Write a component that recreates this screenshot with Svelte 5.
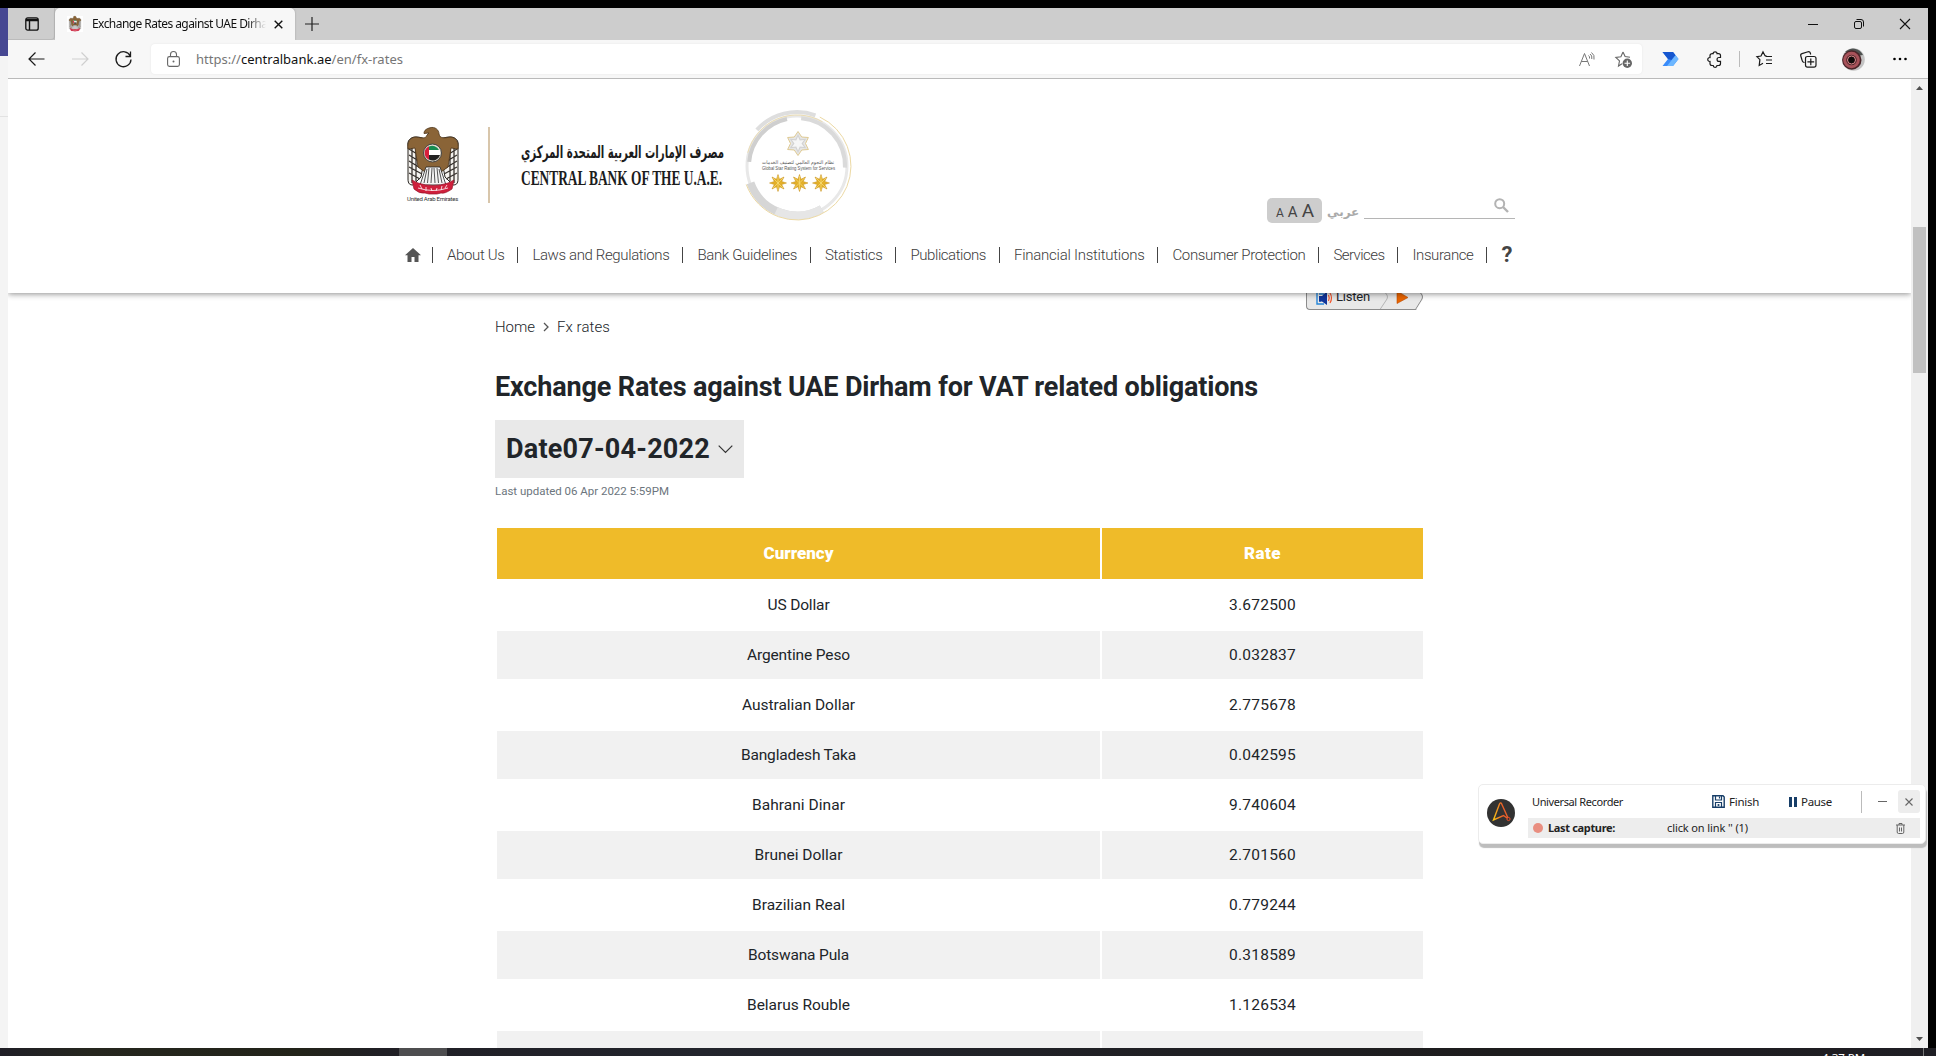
<script>
  const menu = [
    ['About Us', 57.4], ['Laws and Regulations', 137], ['Bank Guidelines', 99.6],
    ['Statistics', 57.5], ['Publications', 75.5], ['Financial Institutions', 130.5],
    ['Consumer Protection', 133], ['Services', 51], ['Insurance', 61]
  ];
  const rates = [
    ['US Dollar', 62, '3.672500'], ['Argentine Peso', 103, '0.032837'],
    ['Australian Dollar', 113, '2.775678'], ['Bangladesh Taka', 115, '0.042595'],
    ['Bahrani Dinar', 93, '9.740604'], ['Brunei Dollar', 88, '2.701560'],
    ['Brazilian Real', 93, '0.779244'], ['Botswana Pula', 101, '0.318589'],
    ['Belarus Rouble', 103, '1.126534']
  ];
  const starPoints = (cx, cy, R, r, n = 8) =>
    Array.from({ length: n * 2 }, (_, i) => {
      const a = (Math.PI * i) / n - Math.PI / 2;
      const q = i % 2 ? r : R;
      return `${(cx + q * Math.cos(a)).toFixed(2)},${(cy + q * Math.sin(a)).toFixed(2)}`;
    }).join(' ');
  const arc = (r, a, b) => {
    const p = (d) => `${(55 + r * Math.cos((d * Math.PI) / 180)).toFixed(2)} ${(56 + r * Math.sin((d * Math.PI) / 180)).toFixed(2)}`;
    return `M${p(a)}A${r} ${r} 0 ${b - a > 180 ? 1 : 0} 1 ${p(b)}`;
  };

  // Tracks a label in or out so that it occupies exactly `width` pixels.
  function fit(node, width) {
    node.style.display = 'inline-block';
    node.style.whiteSpace = 'nowrap';
    const natural = node.getBoundingClientRect().width;
    const count = [...node.textContent].length;
    node.style.letterSpacing = `${(width - natural) / count}px`;
    node.style.width = `${width}px`;
  }
</script>

{#snippet emblem()}
  <path d="M26 12C18 14 17 10 9 10C3 10 0 14 1 19V52C1 57 3 58 6 58L14 50L18 28ZM26 12C34 14 35 10 43 10C49 10 52 14 51 19V52C51 57 49 58 46 58L38 50L34 28Z" fill="#f5f3ef" stroke="#26231f" stroke-width="1" />
  <path d="M2 22L15 30M2 28L15 36M2 34L15 42M2 40L15 47M2 46L13 52M50 22L37 30M50 28L37 36M50 34L37 42M50 40L37 47M50 46L39 52M5 20V56M9 22V54M47 20V56M43 22V54" stroke="#38332f" stroke-width="1.300" fill="none" />
  <path d="M23 .8C28-.8 32 3 32 7C33 12 38 11 43 10C49 10 52 15 51 22L44 21L41 40L34 45H18L11 40L8 21L1 22C0 15 3 10 9 10C15 11 19 12 20 8L22 6L17 6.500C17 3 20 1.500 23 .8Z" fill="#8a6437" stroke="#4a3218" stroke-width="0.8" />
  <path d="M19 40H33L39 58H13Z" fill="#f4f4f4" stroke="#222" stroke-width="0.8" />
  <path d="M17 56L20 42M20.500 56L22 41M24 56L25 41M28 56L27 41M31.500 56L30 41M35 56L32 42" stroke="#555" stroke-width="1" />
  <circle cx="25.500" cy="26" r="9" fill="#e3ddcf" stroke="#444" stroke-width="1" />
  <path d="M22 19.500A7.500 7.500 0 0 1 32 23H22Z" fill="#168c50" />
  <path d="M22 23H33V28H22Z" fill="#fff" />
  <path d="M22 28H33A7.500 7.500 0 0 1 22 32.500Z" fill="#222" />
  <path d="M22 19.200A7.500 7.500 0 0 0 22 32.800Z" fill="#d71f3c" />
  <path d="M5 53L11 56Q26 61 41 56L47 53L45 62Q38 67 34 66L30 67H22L18 66Q12 67 7 62Z" fill="#cf203c" stroke="#97142a" stroke-width="0.7" />
  <path d="M11 61Q26 66 41 61M13 58L15 62M19 60V64M24 61L25 64M30 61L29 64M35 59L34 63M40 58L38 61" stroke="#fff" stroke-width="0.8" fill="none" />
{/snippet}

<div class="desktop">
  <div class="behind"><div class="behind-top"></div><div class="behind-bar"></div></div>

  <div class="window">
    <div class="tabs">
      <div class="tab-menu">
        <svg width="14" height="14" viewBox="0 0 14 14"><rect x=".8" y=".8" width="12.400" height="12.400" rx="2" fill="none" stroke="#111" stroke-width="1.300" /><path d="M1 2.500H13M1 3.500H13M4.500 4V13" stroke="#111" stroke-width="1.400" /></svg>
      </div>
      <div class="tab">
        <span class="favicon"><svg width="14" height="16" viewBox="-1 0 54 70">{@render emblem()}</svg></span>
        <span class="tab-title"><span use:fit={186}>Exchange Rates against UAE Dirham</span></span>
        <svg class="tab-close" width="9" height="9" viewBox="0 0 9 9"><path d="M.7.7L8.300 8.300M8.300.7L.7 8.300" stroke="#111" stroke-width="1.400" /></svg>
      </div>
      <svg class="new-tab" width="14" height="14" viewBox="0 0 14 14"><path d="M7 0V14M0 7H14" stroke="#222" stroke-width="1.200" /></svg>
      <div class="controls">
        <svg width="10" height="10" viewBox="0 0 10 10"><path d="M0 5.500H10" stroke="#111" /></svg>
        <svg width="10" height="10" viewBox="0 0 10 10"><rect x=".5" y="2.500" width="7" height="7" rx="1.500" fill="none" stroke="#111" /><path d="M2.500.5H7Q9.500.5 9.500 3V7.500" fill="none" stroke="#111" /></svg>
        <svg width="10" height="10" viewBox="0 0 10 10"><path d="M0 0L10 10M10 0L0 10" stroke="#111" stroke-width="1.100" /></svg>
      </div>
    </div>

    <div class="toolbar">
      <svg class="back" width="17" height="14" viewBox="0 0 17 14"><path d="M16.500 7H1M7.500.5L1 7L7.500 13.500" fill="none" stroke="#1b1b1b" stroke-width="1.200" /></svg>
      <svg class="forward" width="17" height="14" viewBox="0 0 17 14"><path d="M0 7H16M9.500.5L16 7L9.500 13.500" fill="none" stroke="#cfcfcf" stroke-width="1.200" /></svg>
      <svg class="reload" width="17" height="17" viewBox="0 0 17 17"><path d="M15.300 5A7.500 7.500 0 1 0 16 8.500M15.500.5V5.500H10.500" fill="none" stroke="#1b1b1b" stroke-width="1.300" /></svg>
      <div class="address">
        <svg class="lock" width="13" height="16" viewBox="0 0 13 16"><rect x=".6" y="5.600" width="11.800" height="9.800" rx="1.800" fill="none" stroke="#666" stroke-width="1.100" /><path d="M3.500 5.500V3.500A3 3 0 0 1 9.500 3.500V5.500" fill="none" stroke="#666" stroke-width="1.100" /><circle cx="6.500" cy="10.500" r="1" fill="#666" /></svg>
        <span class="url" use:fit={207}>https://<b>centralbank.ae</b>/en/fx-rates</span>
        <svg class="read" width="16" height="15" viewBox="0 0 16 15"><path d="M.5 14L5.500 1.500L10.500 14M2.300 9.500H8.700M9.500 3.500Q11 4.500 10.500 6.500M11 2Q13.500 3.500 12.800 7M12.500.5Q16 3 15 7.500" fill="none" stroke="#777" stroke-width="1" /></svg>
        <svg width="17" height="17" viewBox="0 0 17 17"><path d="M8 1L10.100 5.600L15 6.200M7 12.700L3.500 15L4.500 9.900L.8 6.400L5.900 5.700L8 1" fill="none" stroke="#666" stroke-width="1.100" /><circle cx="12.300" cy="12.300" r="4.700" fill="#666" /><path d="M12.300 9.500V15.100M9.500 12.300H15.100" stroke="#fff" stroke-width="1.100" /></svg>
      </div>
      <svg class="automate" width="17" height="14" viewBox="0 0 17 14"><path d="M.5 0H11L16.500 7L11 14H.5L6 7Z" fill="#398bfa" /><path d="M.5 0H11L13.500 3.200L9.500 8L6 7Z" fill="#1556cf" /><path d="M13.500 3.200L16.500 7L11 14H5Z" fill="#6db7ff" /></svg>
      <svg class="puzzle" width="16" height="17" viewBox="0 0 16 17"><path d="M5.500 2.600H6.200C6 .3 10.200.3 10 2.600H11.500Q13.500 2.600 13.500 4.500V6.500H12A1.900 1.900 0 0 0 12 10.400H13.500V12.500Q13.500 14.500 11.500 14.500H10C10 17 6.200 17 6.200 14.500H5Q3 14.500 3 12.500V10.500C0 10.700 0 6.300 3 6.500V4.500Q3 2.600 5.500 2.600Z" fill="none" stroke="#1b1b1b" stroke-width="1.200" /></svg>
      <span class="rule"></span>
      <svg class="favs" width="17" height="16" viewBox="0 0 17 16"><path d="M10.500 4.800L9 4.700L7 .9L5 5L.9 5.600L3.900 8.600L3.200 14.500L7 12.300M9.500 5.500H16M10 9H16M10 12.500H16" fill="none" stroke="#1b1b1b" stroke-width="1.200" /></svg>
      <svg class="collections" width="17" height="17" viewBox="0 0 17 17"><path d="M4.500 11.500Q2.500 11.500 2 9L.8 5Q.3 3.200 2 2.700L8 .8Q9.800.4 10.300 2L10.700 3.500M5.500 14V7.500Q5.500 5.500 7.500 5.500H14Q16 5.500 16 7.500V14Q16 16.200 14 16.200H7.500Q5.500 16.200 5.500 14Z" fill="none" stroke="#1b1b1b" stroke-width="1.200" /><path d="M10.800 7.500V14.200M7.400 10.800H14.200" stroke="#1b1b1b" stroke-width="1.200" /></svg>
      <svg class="avatar" width="23" height="23" viewBox="0 0 23 23"><circle cx="11.500" cy="11.500" r="11.300" fill="#c4c4c4" /><path d="M3 4A11 11 0 0 1 21 7L14 8Z" fill="#4d5150" /><circle cx="9.800" cy="12" r="9.700" fill="#4a2529" /><circle cx="9.500" cy="12" r="6.800" fill="none" stroke="#a8525a" stroke-width="3" /><circle cx="9.500" cy="12" r="4" fill="#110b0b" stroke="#df8a8c" stroke-width="1" /></svg>
      <svg class="more" width="14" height="4" viewBox="0 0 14 4"><circle cx="1.500" cy="2" r="1.300" /><circle cx="7" cy="2" r="1.300" /><circle cx="12.500" cy="2" r="1.300" /></svg>
    </div>

    <div class="viewport">
      <div class="page">
        <header>
          <div class="brand-row">
            <div class="emblem">
              <svg width="52" height="68" viewBox="0 0 52 68">{@render emblem()}</svg>
              <span use:fit={51}>United Arab Emirates</span>
            </div>
            <div class="brand-rule"></div>
            <div class="names">
              <svg width="206" height="54" viewBox="0 0 206 54">
                <text class="ar" x="103.500" y="22" text-anchor="middle" textLength="203" lengthAdjust="spacingAndGlyphs" direction="rtl">مصرف الإمارات العربية المتحدة المركزي</text>
                <text class="en" x="2" y="49" textLength="201" lengthAdjust="spacingAndGlyphs">CENTRAL BANK OF THE U.A.E.</text>
              </svg>
            </div>
            <svg class="badge" width="110" height="114" viewBox="0 0 110 114">
              <circle cx="55" cy="56" r="50" fill="none" stroke="#e8e8e8" stroke-width="3" />
              <path d={arc(48, 185, 258)} fill="none" stroke="#cfcfcf" stroke-width="4" />
              <path d={arc(48, 275, 362)} fill="none" stroke="#dadada" stroke-width="4" />
              <path d={arc(49.5, 60, 160)} fill="none" stroke="#d6d6d6" stroke-width="8" />
              <path d={arc(49.5, 60, 115)} fill="none" stroke="#e6e6e6" stroke-width="8" />
              <path d={arc(54, 222, 290)} fill="none" stroke="#dedede" stroke-width="4" />
              <path d={arc(54, -65, 110)} fill="none" stroke="#ecd9a4" stroke-width="1" />
              <path d={arc(51, 195, 300)} fill="none" stroke="#ecd9a4" stroke-width="0.8" />
              <path d={arc(54, 110, 160)} fill="none" stroke="#ecd9a4" stroke-width="1" />
              <polygon points={starPoints(56, 33.5, 12, 7.5, 6)} fill="#e6e6e6" stroke="#dcc588" stroke-width="0.9" />
              <polygon points={starPoints(56, 33.5, 9.5, 5, 6)} fill="#d2d2d2" />
              <polygon points={starPoints(56, 33.5, 7, 3.5, 6)} fill="#f6f6f6" />
              <text class="badge-ar" x="56" y="53.500" text-anchor="middle" textLength="72" lengthAdjust="spacingAndGlyphs" direction="rtl">نظام النجوم العالمي لتصنيف الخدمات</text>
              <text class="badge-en" x="20" y="59.500" textLength="73" lengthAdjust="spacingAndGlyphs">Global Star Rating System for Services</text>
              {#each [36, 57.5, 79] as x}
                <polygon points={starPoints(x, 73, 8.5, 4)} fill="#e3b02a" stroke="#c48b12" stroke-width="0.5" />
                <path d="M{x} 66V80M{x - 5} 68L{x + 5} 78M{x - 5} 78L{x + 5} 68" stroke="#f8e07c" stroke-width="0.7" />
              {/each}
            </svg>
            <div class="tools">
              <div class="sizes"><span class="s1">A</span><span class="s2">A</span><span class="s3">A</span></div>
              <span class="lang">عربي</span>
              <div class="search">
                <svg width="15" height="15" viewBox="0 0 15 15"><circle cx="5.700" cy="5.700" r="4.500" fill="none" stroke="#b3b3b3" stroke-width="2" /><path d="M9 9L14 14" stroke="#b3b3b3" stroke-width="2.400" /></svg>
              </div>
            </div>
          </div>
          <nav>
            <svg class="home" width="16" height="14" viewBox="0 0 16 14"><path d="M8 0L16 7.200H13.500V14H9.500V9H6.500V14H2.500V7.200H0Z" fill="#555" /></svg>
            {#each menu as [label, width]}
              <i></i><span use:fit={width}>{label}</span>
            {/each}
            <i></i><span class="help">?</span>
          </nav>
        </header>

        <main>
          <div class="listen">
            <svg class="listen-icon" width="17" height="16" viewBox="0 0 17 16"><path d="M1 0H9M1 0V14H8M3 4H8M3 7.500H6M3 11H5" fill="none" stroke="#2485d8" stroke-width="1.400" /><path d="M3 6H6L11 1V15L6 11.500H3Z" fill="#11369b" /><path d="M12.500 5Q14 8 12.500 11M14 3Q17 8 14 13" fill="none" stroke="#f2552c" stroke-width="1.200" /></svg>
            <span use:fit={34}>Listen</span>
            <svg class="play" width="50" height="23" viewBox="0 0 50 23"><path d="M1 0H37L42.500 8Q44 10 42.500 12L36 22.500H0L8 12Q9 10 8 8Z" fill="#e8e8e8" /><path d="M2 0L8 8Q9 10 8 12L1 22.500" fill="none" stroke="#b5b5b5" /><path d="M38 1L43 8Q44 10 43 12L36.500 22.500H0" fill="none" stroke="#8c8c8c" /><path d="M18 4L29 10.500L18 16.500Z" fill="#e96400" stroke="#b94a00" stroke-width=".6" /></svg>
          </div>
          <div class="crumbs">
            <span use:fit={40}>Home</span>
            <svg width="6" height="10" viewBox="0 0 6 10"><path d="M1 1L5 5L1 9" fill="none" stroke="#555" stroke-width="1.300" /></svg>
            <span use:fit={53}>Fx rates</span>
          </div>
          <h1><span use:fit={763}>Exchange Rates against UAE Dirham for VAT related obligations</span></h1>
          <div class="date">
            <span use:fit={204}>Date07-04-2022</span>
            <svg width="15" height="9" viewBox="0 0 15 9"><path d="M.7.700L7.500 7.500L14.300.700" fill="none" stroke="#333" stroke-width="1.200" /></svg>
          </div>
          <p class="updated"><span use:fit={174}>Last updated 06 Apr 2022 5:59PM</span></p>
          <div class="rates">
            <div class="row head"><div><span use:fit={70}>Currency</span></div><div><span use:fit={37}>Rate</span></div></div>
            {#each rates as [name, width, rate]}
              <div class="row"><div><span use:fit={width}>{name}</span></div><div><span use:fit={67}>{rate}</span></div></div>
            {/each}
            <div class="row"><div></div><div></div></div>
          </div>
        </main>
      </div>
      <div class="scrollbar">
        <svg width="7" height="4" viewBox="0 0 7 4"><path d="M0 4L3.500 0L7 4Z" fill="#505050" /></svg>
        <div class="thumb"></div>
        <svg class="down" width="7" height="4" viewBox="0 0 7 4"><path d="M0 0L3.500 4L7 0Z" fill="#505050" /></svg>
      </div>
    </div>
  </div>

  <div class="taskbar"><div class="task"></div><span class="clock">4:37 PM</span><i></i></div>

  <div class="recorder">
    <svg class="rec-logo" width="28" height="28" viewBox="0 0 28 28"><defs><linearGradient id="flame" x1="0" x2="1"><stop offset="0" stop-color="#f8c316" /><stop offset=".6" stop-color="#e9602a" /></linearGradient></defs><circle cx="14" cy="14" r="14" fill="#323232" /><path d="M21 19L14.500 4.500Q13.500 3 12.500 5L6.500 21L16.500 16.500L20 19" fill="none" stroke="url(#flame)" stroke-width="1.400" /><circle cx="21.500" cy="20" r="1.600" fill="none" stroke="#e9502a" /></svg>
    <div class="rec-body">
      <div class="rec-top">
        <span class="rec-name" use:fit={91}>Universal Recorder</span>
        <svg class="save" width="13" height="13" viewBox="0 0 13 13"><path d="M.8.800H11L12.200 2V12.200H.8Z" fill="none" stroke="#173e68" stroke-width="1.400" /><path d="M3.500 1V5H9.500V1M7.500 1.500V3.500M3.500 12V7.500H9.500V12" fill="none" stroke="#173e68" stroke-width="1.200" /><circle cx="6.500" cy="10" r="1.100" fill="#173e68" /></svg>
        <span class="rec-act" use:fit={30}>Finish</span>
        <svg class="pause" width="8" height="10" viewBox="0 0 8 10"><path d="M0 0H3V10H0ZM5 0H8V10H5Z" fill="#173e68" /></svg>
        <span class="rec-act" use:fit={31}>Pause</span>
        <span class="rec-rule"></span>
        <span class="minus"></span>
        <span class="rec-x"><svg width="8" height="8" viewBox="0 0 8 8"><path d="M.5.500L7.500 7.500M7.500.500L.5 7.500" stroke="#666" stroke-width="1.100" /></svg></span>
      </div>
      <div class="rec-bar">
        <span class="dot"></span>
        <b use:fit={67}>Last capture:</b>
        <span class="click" use:fit={81}>click on link '' (1)</span>
        <svg width="9" height="11" viewBox="0 0 9 11"><path d="M0 2H9M3 2V.5H6V2M1.200 2V9Q1.200 10.500 2.500 10.500H6.500Q7.800 10.500 7.800 9V2M3.500 4.500V8.500M5.500 4.500V8.500" fill="none" stroke="#666" /></svg>
      </div>
    </div>
  </div>
</div>

<style>
  :global(body) { margin: 0; background: #000; }
  .desktop { position: relative; box-sizing: border-box; width: 1936px; height: 1056px; padding-top: 8px; background: #000; overflow: hidden; display: grid; grid-template: 1040px 8px / 8px 1920px 8px; font-family: "Noto Sans", "Open Sans", sans-serif; color: #212529; }
  .desktop * { box-sizing: border-box; }
  svg { display: block; flex: none; overflow: visible; }
  .behind { background: #f4f4f4; }
  .behind-top { height: 48px; background: #464792; }
  .behind-bar { height: 61px; border-bottom: 1px solid #e2e2e2; }
  .window { display: flex; flex-direction: column; background: #fff; min-width: 0; }

  .tabs { height: 32px; background: #cdcdcd; display: flex; align-items: center; }
  .tab-menu { width: 47px; height: 32px; padding: 9px 0 0 17px; border-bottom: 1px solid #bbb; border-right: 1px solid #bbb; border-radius: 0 0 4px 0; }
  .tab { width: 240px; height: 32px; background: #f7f7f7; border-radius: 5px 5px 0 0; display: flex; align-items: center; padding-left: 12px; box-shadow: 0 0 2px #999; clip-path: inset(0 -2px 0 -2px); }
  .favicon { width: 16px; height: 16px; background: #fff; display: flex; justify-content: center; }
  .tab-title { width: 174px; margin-left: 9px; overflow: hidden; font-size: 12px; line-height: 18px; white-space: nowrap; color: #111; -webkit-mask-image: linear-gradient(90deg, #000 155px, transparent 174px); }
  .tab-close { margin-left: 8px; }
  .new-tab { margin-left: 10px; }
  .controls { margin-left: auto; display: flex; gap: 36px; padding-right: 18px; }

  .toolbar { height: 39px; background: #f7f7f7; border-bottom: 1px solid #bababa; display: flex; align-items: center; padding-left: 20px; }
  .forward { margin-left: 27px; }
  .reload { margin-left: 26px; }
  .address { width: 1491px; height: 30px; margin-left: 19px; background: #fff; border-radius: 4px; box-shadow: 0 0 2px #e3e3e3; display: flex; align-items: center; padding: 0 10px 0 16px; }
  .url { margin-left: 16px; font-size: 13px; line-height: 20px; color: #767676; }
  .url b { font-weight: 400; color: #111; }
  .read { margin: 0 20px 0 auto; }
  .automate { margin-left: 20px; }
  .puzzle { margin-left: 28px; }
  .rule { width: 1px; height: 16px; background: #bbb; margin: 0 16px; }
  .collections { margin-left: 27px; }
  .avatar { margin-left: 25px; }
  .more { margin-left: 28px; }

  .viewport { flex: 1; display: flex; min-height: 0; overflow: hidden; }
  .page { width: 1903px; overflow: hidden; font-family: Roboto, "Open Sans", sans-serif; }
  .scrollbar { width: 17px; background: #f0f0f0; padding-top: 7px; display: flex; flex-direction: column; align-items: center; }
  .thumb { width: 13px; height: 146px; margin-top: 137px; background: #c1c1c1; }
  .down { margin: auto 0 7px; }

  header { position: relative; z-index: 1; height: 214px; background: #fff; box-shadow: 0 1px 6px rgba(0, 0, 0, .45); }
  .brand-row { height: 156px; padding-left: 399px; display: flex; align-items: flex-start; }
  .emblem { width: 52px; margin-top: 48px; font-size: 6px; line-height: 8px; color: #333; }
  .brand-rule { width: 2px; height: 76px; margin: 48px 0 0 29px; background: #d8c6ab; }
  .names { margin: 57px 0 0 29px; }
  .ar { font: 700 17px "DejaVu Sans", sans-serif; fill: #1c1c1c; }
  .en { font: 700 20px "Liberation Serif", serif; fill: #1c1c1c; }
  .badge { margin: 31px 0 0 17px; }
  .badge-ar { font: 5px "DejaVu Sans", sans-serif; fill: #555; }
  .badge-en { font: 5px "Liberation Sans", sans-serif; fill: #555; }
  .tools { margin: 119px 0 0 415px; display: flex; align-items: flex-start; }
  .sizes { width: 55px; height: 25px; background: #cdcdcd; border-radius: 5px; color: #444; display: flex; gap: 4px; padding-left: 9px; align-items: baseline; line-height: 25px; }
  .s1 { font-size: 12px; }
  .s2 { font-size: 15px; }
  .s3 { font-size: 19px; }
  .lang { width: 30px; margin-left: 5px; font: 700 12px/28px "DejaVu Sans", sans-serif; color: #aaa; white-space: nowrap; }
  .search { width: 151px; height: 21px; margin-left: 7px; border-bottom: 1px solid #b5b5b5; display: flex; justify-content: flex-end; padding-right: 6px; }
  nav { height: 40px; padding-left: 397px; display: flex; align-items: center; font-size: 15px; font-weight: 300; color: #3c3c3c; }
  nav span { line-height: 20px; }
  nav i { width: 1px; height: 16px; margin: 0 14px 0 13px; background: #444; flex: none; }
  nav .home { margin-right: -2px; }
  nav .help { font-size: 22px; font-weight: 700; color: #444; }

  main { width: 930px; margin-left: 487px; display: flex; flex-direction: column; align-items: flex-start; }
  .listen { align-self: flex-end; width: 117px; height: 23px; margin: -6px 2px 0 0; display: flex; background: #e8e8e8; border: 1px solid #8c8c8c; border-width: 0 0 1px 1px; border-radius: 0 0 0 4px; clip-path: polygon(0 0, 112px 0, 117px 8px, 117px 12px, 110px 23px, 0 23px); font-size: 13px; line-height: 20px; }
  .listen-icon { margin: 3px 3px 0 9px; }
  .play { margin-left: 9px; }
  .crumbs { height: 34px; display: flex; align-items: center; gap: 8px; font-size: 15px; font-weight: 300; line-height: 34px; }
  h1 { margin: 21px 0 0; font-size: 27px; font-weight: 700; line-height: 44px; }
  .date { width: 249px; height: 58px; margin-top: 11px; padding-left: 11px; background: #e9e9e9; display: flex; align-items: center; font-size: 27px; font-weight: 700; }
  .date svg { margin-left: 8px; }
  .updated { margin: 2px 0 0; font-size: 11.500px; line-height: 22px; color: #6c757d; }
  .rates { width: 926px; margin: 26px 0 0 2px; display: flex; flex-direction: column; gap: 2px; font-size: 15.500px; }
  .row { display: grid; grid-template-columns: 603px 321px; gap: 2px; height: 48px; line-height: 48px; text-align: center; }
  .row:nth-child(odd) div { background: #f1f1f1; }
  .rates .head { height: 51px; line-height: 51px; color: #fff; font-size: 17px; font-weight: 900; }
  .rates .head div { background: #efbb29; }

  .taskbar { grid-column: 1 / -1; height: 8px; overflow: hidden; background: linear-gradient(90deg, #1f1e26, #25261e 90px, #222319 300px, #201f25 380px, #22242c 700px, #1d1c1d 1500px, #1f1e24); display: flex; }
  .task { width: 48px; margin-left: 399px; background: #4d4d4f; }
  .clock { margin-left: 1375px; padding-top: 2px; font-size: 11.500px; line-height: 16px; color: #fff; white-space: nowrap; }
  .taskbar i { width: 1px; margin-left: auto; margin-right: 12px; background: #777; }

  .recorder { position: absolute; left: 1478px; top: 784px; width: 448px; height: 60px; background: #fff; border: 1px solid #ececec; border-radius: 5px; box-shadow: 1px 4px 1px #bdbdbd; display: flex; padding-left: 8px; font-size: 11px; line-height: 16px; color: #222; }
  .rec-logo { margin-top: 14px; }
  .rec-body { width: 392px; margin-left: 13px; }
  .rec-top { height: 33px; display: flex; align-items: center; }
  .rec-name { margin-left: 4px; }
  .save { margin: 0 4px 0 89px; }
  .pause { margin: 0 4px 0 30px; }
  .rec-act { font-size: 11.500px; }
  .rec-rule { width: 1px; height: 22px; margin-left: 29px; background: #bbb; }
  .minus { width: 9px; height: 1px; margin-left: 16px; background: #666; }
  .rec-x { width: 22px; height: 23px; margin-left: 11px; background: #ededed; border-radius: 3px; display: flex; align-items: center; justify-content: center; }
  .rec-bar { height: 20px; background: #ededed; display: flex; align-items: center; }
  .dot { width: 10px; height: 10px; margin: 0 5px; border-radius: 50%; background: #e98e80; }
  .rec-bar b { font-size: 11px; }
  .click { margin-left: 52px; }
  .rec-bar svg { margin: 0 15px 0 auto; }
</style>
